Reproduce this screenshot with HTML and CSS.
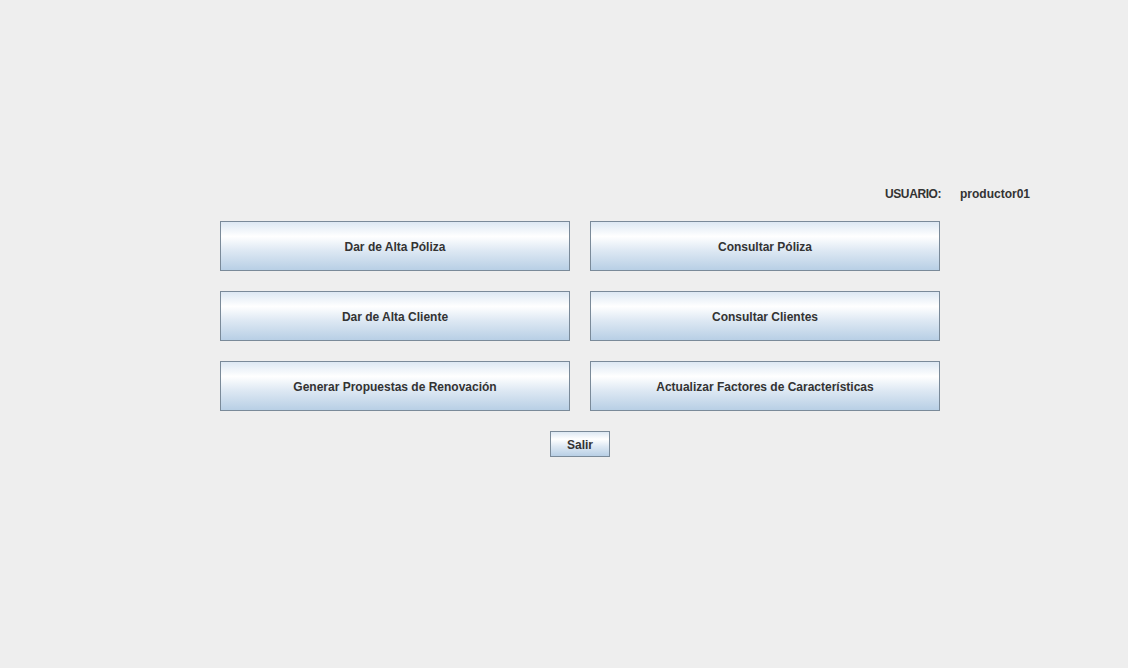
FILE: index.html
```html
<!DOCTYPE html>
<html lang="es">
<head>
<meta charset="utf-8">
<title>Menú</title>
<link rel="stylesheet" href="styles.css">
</head>
<body>
<div class="panel">
  <div class="user">
    <span class="user-label">USUARIO:</span>
    <span class="user-name">productor01</span>
  </div>
  <div class="grid">
    <button class="btn">Dar de Alta Póliza</button>
    <button class="btn">Consultar Póliza</button>
    <button class="btn">Dar de Alta Cliente</button>
    <button class="btn">Consultar Clientes</button>
    <button class="btn">Generar Propuestas de Renovación</button>
    <button class="btn">Actualizar Factores de Características</button>
  </div>
  <div class="exit-row">
    <button class="btn btn-small">Salir</button>
  </div>
</div>
</body>
</html>
```
FILE: styles.css
```css
html, body {
  margin: 0;
  padding: 0;
  background: #eeeeee;
  width: 1128px;
  height: 668px;
  overflow: hidden;
}
body {
  font-family: "Liberation Sans", Arial, sans-serif;
  font-size: 12px;
  font-weight: bold;
  color: #333333;
}
.panel {
  padding-top: 187px;
  display: flex;
  flex-direction: column;
}
.user {
  display: flex;
  margin-left: 885px;
  height: 15px;
  line-height: 15px;
}
.user-label {
  width: 75px;
  letter-spacing: -0.4px;
}
.grid {
  margin-top: 19px;
  margin-left: 220px;
  display: grid;
  grid-template-columns: 350px 350px;
  grid-auto-rows: 50px;
  column-gap: 20px;
  row-gap: 20px;
  width: 720px;
}
.btn {
  font-family: "Liberation Sans", Arial, sans-serif;
  font-size: 12px;
  font-weight: bold;
  color: #333333;
  border: 1px solid #7a8a99;
  border-radius: 0;
  padding: 2px 0 0 0;
  margin: 0;
  background: linear-gradient(to bottom, #dde8f3 0%, #ffffff 30%, #dde8f3 60%, #b8cfe5 100%);
  display: flex;
  align-items: center;
  justify-content: center;
}
.exit-row {
  margin-top: 20px;
  margin-left: 550px;
  display: flex;
}
.btn-small {
  width: 60px;
  height: 26px;
}
```
